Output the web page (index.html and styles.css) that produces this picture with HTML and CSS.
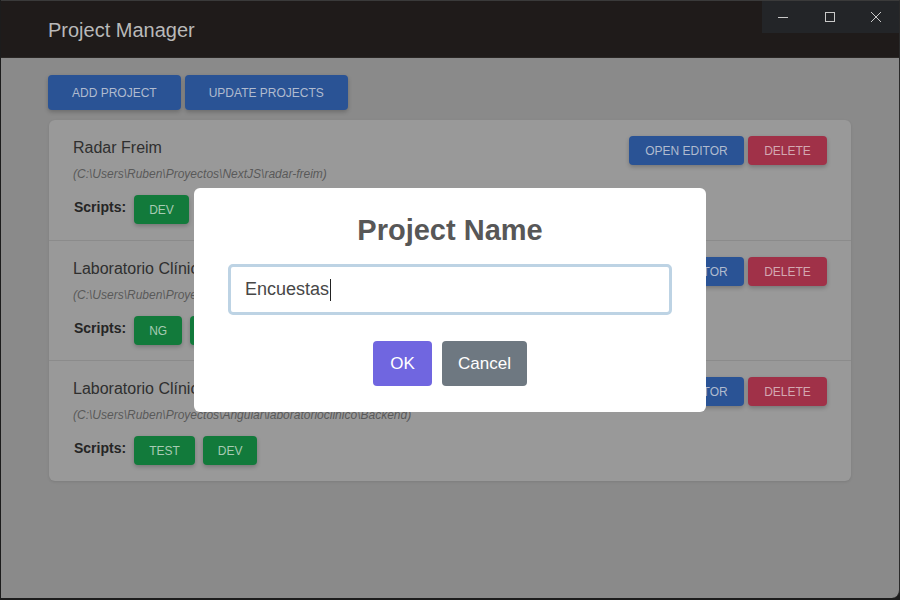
FILE: index.html
```html
<!DOCTYPE html>
<html>
<head>
<meta charset="utf-8">
<link rel="stylesheet" href="styles.css">
</head>
<body>
<div class="window">
  <header class="titlebar">
    <span class="app-title">Project Manager</span>
  </header>
  <div class="controls">
    <svg class="ctl" width="12" height="12" viewBox="0 0 12 12"><path d="M1 6.5H11" stroke="#c9c9c9" stroke-width="1"/></svg>
    <svg class="ctl" width="12" height="12" viewBox="0 0 12 12"><rect x="1.5" y="1.5" width="9" height="9" fill="none" stroke="#c9c9c9" stroke-width="1"/></svg>
    <svg class="ctl" width="12" height="12" viewBox="0 0 12 12"><path d="M1 1L11 11M11 1L1 11" stroke="#c9c9c9" stroke-width="1"/></svg>
  </div>
  <main class="content">
    <div class="toolbar">
      <button class="btn blue big">ADD PROJECT</button>
      <button class="btn blue big">UPDATE PROJECTS</button>
    </div>
    <section class="card">
      <div class="row">
        <div class="info">
          <div class="name">Radar Freim</div>
          <div class="path">(C:\Users\Ruben\Proyectos\NextJS\radar-freim)</div>
          <div class="scripts">
            <span class="label">Scripts:</span>
            <button class="btn green">DEV</button>
          </div>
        </div>
        <div class="actions">
          <button class="btn blue">OPEN EDITOR</button>
          <button class="btn red">DELETE</button>
        </div>
      </div>
      <div class="row">
        <div class="info">
          <div class="name">Laboratorio Clínico Frontend</div>
          <div class="path">(C:\Users\Ruben\Proyectos\Angular\laboratorioclinico\Frontend)</div>
          <div class="scripts">
            <span class="label">Scripts:</span>
            <button class="btn green">NG</button>
            <button class="btn green">DEV</button>
          </div>
        </div>
        <div class="actions">
          <button class="btn blue">OPEN EDITOR</button>
          <button class="btn red">DELETE</button>
        </div>
      </div>
      <div class="row">
        <div class="info">
          <div class="name">Laboratorio Clínico Backend</div>
          <div class="path">(C:\Users\Ruben\Proyectos\Angular\laboratorioclinico\Backend)</div>
          <div class="scripts">
            <span class="label">Scripts:</span>
            <button class="btn green">TEST</button>
            <button class="btn green">DEV</button>
          </div>
        </div>
        <div class="actions">
          <button class="btn blue">OPEN EDITOR</button>
          <button class="btn red">DELETE</button>
        </div>
      </div>
    </section>
  </main>
  <div class="modal">
    <h2 class="modal-title">Project Name</h2>
    <div class="input"><span>Encuestas</span><span class="caret"></span></div>
    <div class="modal-actions">
      <button class="mbtn ok">OK</button>
      <button class="mbtn cancel">Cancel</button>
    </div>
  </div>
</div>
</body>
</html>
```
FILE: styles.css
```css
* { box-sizing: border-box; }
html, body { margin: 0; padding: 0; width: 900px; height: 600px; overflow: hidden; }
body {
  background: #1c1c1c;
  font-family: "Liberation Sans", Arial, sans-serif;
}
.window {
  position: relative;
  width: 899px;
  height: 598px;
  margin-left: 1px;
  background: #8a8a8a;
  border-top: 1px solid #3a3a3a;
  border-right: 1px solid #2a2a2a;
  border-radius: 0 0 8px 0;
  overflow: hidden;
  display: flex;
  flex-direction: column;
}
.titlebar {
  height: 57px;
  flex: none;
  background: #1f1b1a;
  border-bottom: 1px solid #2a2725;
  display: flex;
  align-items: center;
  padding-left: 47px;
  padding-top: 2px;
}
.app-title {
  color: #b9b9b9;
  font-size: 20px;
}
.controls {
  position: absolute;
  top: 0;
  right: 0;
  width: 137px;
  height: 32px;
  background: #232528;
  display: flex;
  align-items: center;
  justify-content: space-between;
  padding: 0 17px 1px 15px;
}
.content {
  padding: 17px 48px 0 47px;
}
.toolbar {
  display: flex;
  gap: 4px;
}
.btn {
  border: none;
  font-family: "Liberation Sans", Arial, sans-serif;
  font-size: 12px;
  height: 29px;
  padding: 0 16px;
  border-radius: 4px;
  box-shadow: 0 2px 4px rgba(0,0,0,0.22);
  white-space: nowrap;
  cursor: pointer;
}
.btn.big {
  height: 35px;
  padding: 0 24px;
}
.blue { background: #2a5395; color: #b0bbcf; }
.red { background: #a03148; color: #d3a8b1; }
.green { background: #127a3b; color: #a7cbb3; }
.card {
  margin-top: 10px;
  margin-left: 1px;
  width: 802px;
  background: #999999;
  border-radius: 6px;
  box-shadow: 0 1px 3px rgba(0,0,0,0.1);
}
.row {
  display: flex;
  justify-content: space-between;
  align-items: flex-start;
  padding: 16px 24px 16px 24px;
  height: 120px;
}
.row + .row {
  border-top: 1px solid #8b8b8b;
}
.row:last-child { height: 121px; }
.info { display: flex; flex-direction: column; }
.name {
  font-size: 16px;
  color: #2f2f2f;
  line-height: 20px;
  margin-top: 2px;
}
.path {
  font-size: 12px;
  font-style: italic;
  color: #595959;
  margin-top: 8px;
  line-height: 16px;
}
.scripts {
  margin-top: 13px;
  display: flex;
  align-items: flex-start;
  gap: 8px;
}
.label {
  font-size: 14px;
  font-weight: bold;
  color: #252525;
  padding-top: 4px;
  margin-left: 1px;
  margin-right: 0;
}
.actions {
  display: flex;
  gap: 4px;
}
.actions .btn { padding: 0; }
.actions .blue { width: 115px; }
.actions .red { width: 79px; }
.scripts .btn { padding: 0 15px; }

.modal {
  position: absolute;
  left: 193px;
  top: 187px;
  width: 512px;
  height: 224px;
  background: #ffffff;
  border-radius: 6px;
  display: flex;
  flex-direction: column;
  align-items: center;
  padding-top: 25px;
}
.modal-title {
  margin: 0;
  font-size: 29px;
  line-height: 34px;
  font-weight: bold;
  color: #575757;
}
.input {
  margin-top: 17px;
  width: 444px;
  height: 51px;
  border: 3px solid #bdd3e4;
  border-radius: 5px;
  display: flex;
  align-items: center;
  padding-left: 14px;
  font-size: 18px;
  color: #474747;
}
.caret {
  display: inline-block;
  width: 1px;
  height: 22px;
  background: #222;
  margin-left: 1px;
}
.modal-actions {
  margin-top: 26px;
  display: flex;
  gap: 10px;
}
.mbtn {
  border: none;
  height: 45px;
  border-radius: 4px;
  color: #fff;
  font-family: "Liberation Sans", Arial, sans-serif;
  font-size: 17px;
  padding: 0;
}
.ok { background: #7066e0; width: 59px; }
.cancel { background: #6e7881; width: 85px; }
```
